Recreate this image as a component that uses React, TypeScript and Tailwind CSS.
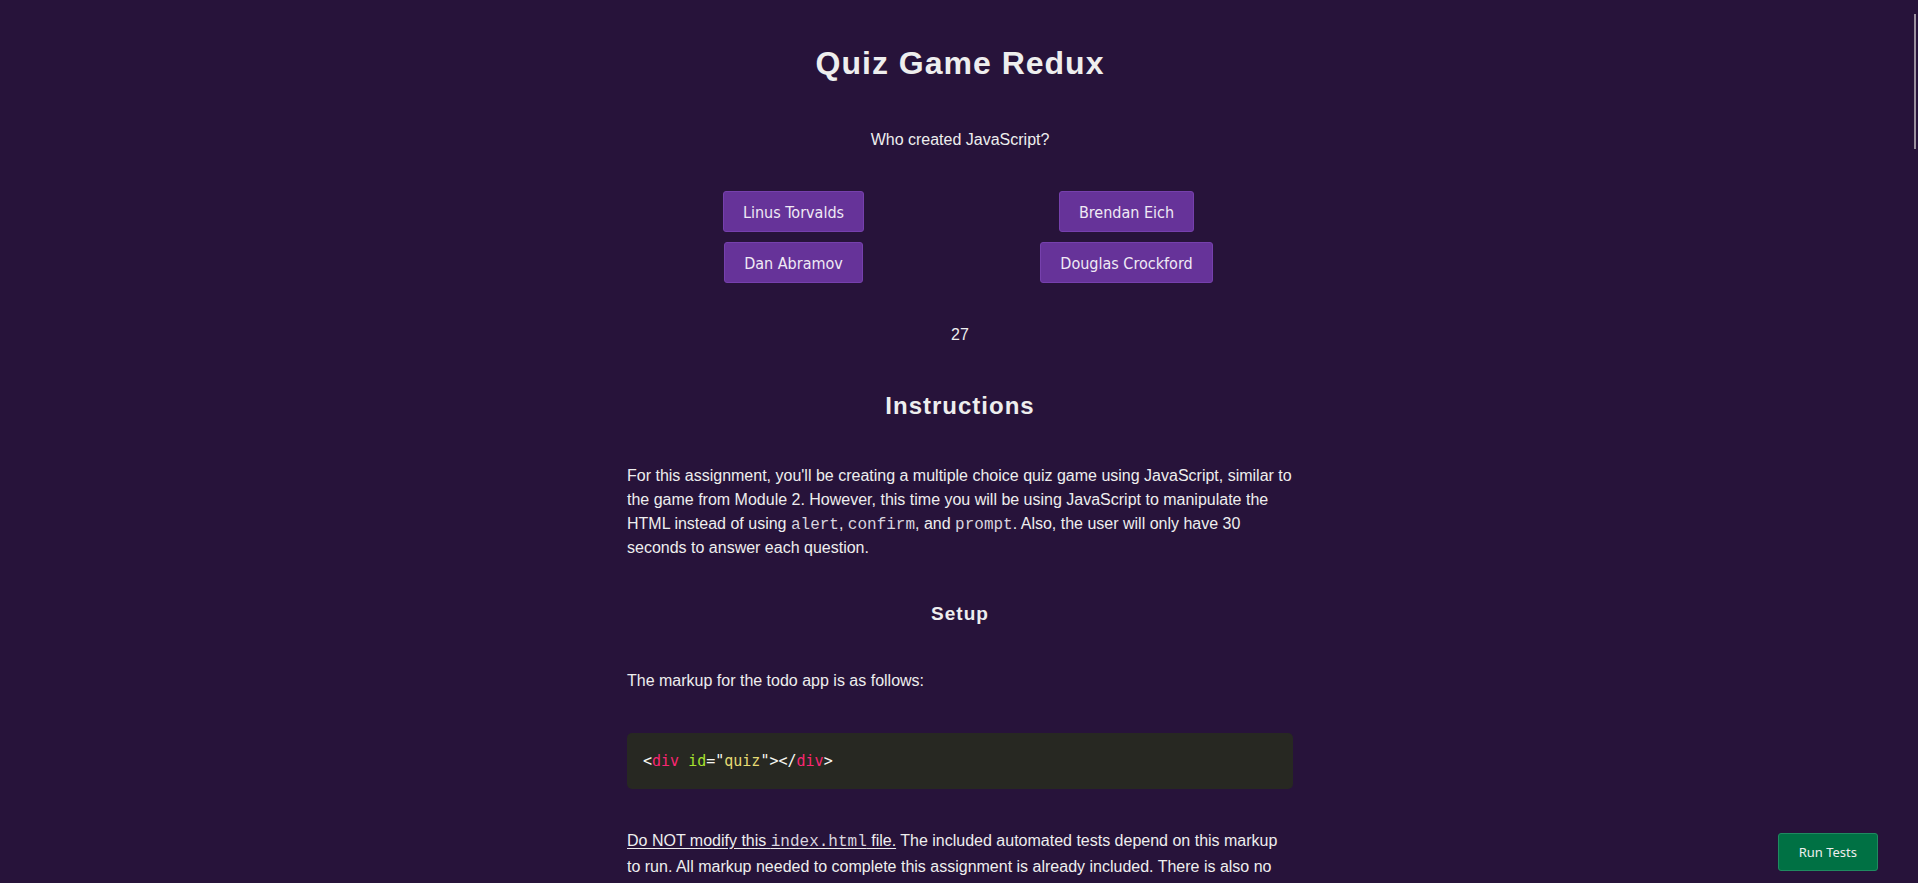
import { useState } from "react";
import type { ReactNode } from "react";

const ANSWERS = ["Linus Torvalds", "Brendan Eich", "Dan Abramov", "Douglas Crockford"];

function Code({ children }: { children: ReactNode }) {
  return <code className="font-['Liberation_Mono',monospace] text-base/4 text-[#d8d4df]">{children}</code>;
}

function AnswerButton({ label, selected, onClick }: { label: string; selected: boolean; onClick: () => void }) {
  return (
    <button
      type="button"
      aria-pressed={selected}
      onClick={onClick}
      className="rounded-[3px] border border-[#7640ad] bg-[#663399] px-[19px] pt-[9px] pb-[7px] font-['DejaVu_Sans_Condensed','Noto_Sans',sans-serif] text-base/[23px] text-[#f0eaf5] hover:bg-[#7340a8]"
    >
      {label}
    </button>
  );
}

export default function App() {
  const [selected, setSelected] = useState<string | null>(null);

  return (
    <div className="h-screen overflow-hidden bg-[#27133a] pl-0.5 font-['Liberation_Sans',Arial,sans-serif] text-base/6 text-[#eeeeee]">
      <main className="mx-auto max-w-[666px]">
        <h1 className="pt-11 text-center text-[32px]/[38px] font-bold tracking-[1px]">Quiz Game Redux</h1>

        <section aria-label="Quiz">
          <p className="mt-[46px] text-center">Who created JavaScript?</p>
          <div className="mt-[39px] grid grid-cols-2 justify-items-center gap-y-[10px]">
            {ANSWERS.map((answer) => (
              <AnswerButton
                key={answer}
                label={answer}
                selected={selected === answer}
                onClick={() => setSelected(answer)}
              />
            ))}
          </div>
          <p className="mt-10 text-center">27</p>
        </section>

        <h2 className="mt-[45px] text-center text-2xl/7 font-bold tracking-[1px]">Instructions</h2>
        <p className="mt-11">
          For this assignment, you'll be creating a multiple choice quiz game using JavaScript, similar to the game
          from Module 2. However, this time you will be using JavaScript to manipulate the HTML instead of using{" "}
          <Code>alert</Code>, <Code>confirm</Code>, and <Code>prompt</Code>. Also, the user will only have 30 seconds
          to answer each question.
        </p>

        <h3 className="mt-10 text-center text-[19px]/7 font-bold tracking-[1px]">Setup</h3>
        <p className="mt-[41px]">The markup for the todo app is as follows:</p>

        <pre className="mt-10 rounded-[5px] bg-[#272822] p-4 text-[15px]/6 text-[#f8f8f2]">
          <code className="block font-['DejaVu_Sans_Mono',monospace]">
            &lt;<span className="text-[#f92672]">div</span> <span className="text-[#a6e22e]">id</span>="
            <span className="text-[#e6db74]">quiz</span>"&gt;&lt;/<span className="text-[#f92672]">div</span>&gt;
          </code>
        </pre>

        <p className="mt-[39px] leading-[26px]">
          <span className="underline underline-offset-2">
            Do NOT modify this <Code>index.html</Code> file.
          </span>{" "}
          The included automated tests depend on this markup to run. All markup needed to complete this assignment is
          already included. There is also no
        </p>
      </main>

      <button
        type="button"
        className="fixed right-10 bottom-3 rounded-[3px] border border-[#1f8a60] bg-[#007144] px-5 py-2 font-['Noto_Sans',sans-serif] text-[13px]/5 text-[#eeeeee] hover:bg-[#00804d]"
      >
        Run Tests
      </button>
      <div aria-hidden="true" className="fixed top-[14px] right-[2px] h-[135px] w-[2px] bg-[#9c919f]" />
    </div>
  );
}
